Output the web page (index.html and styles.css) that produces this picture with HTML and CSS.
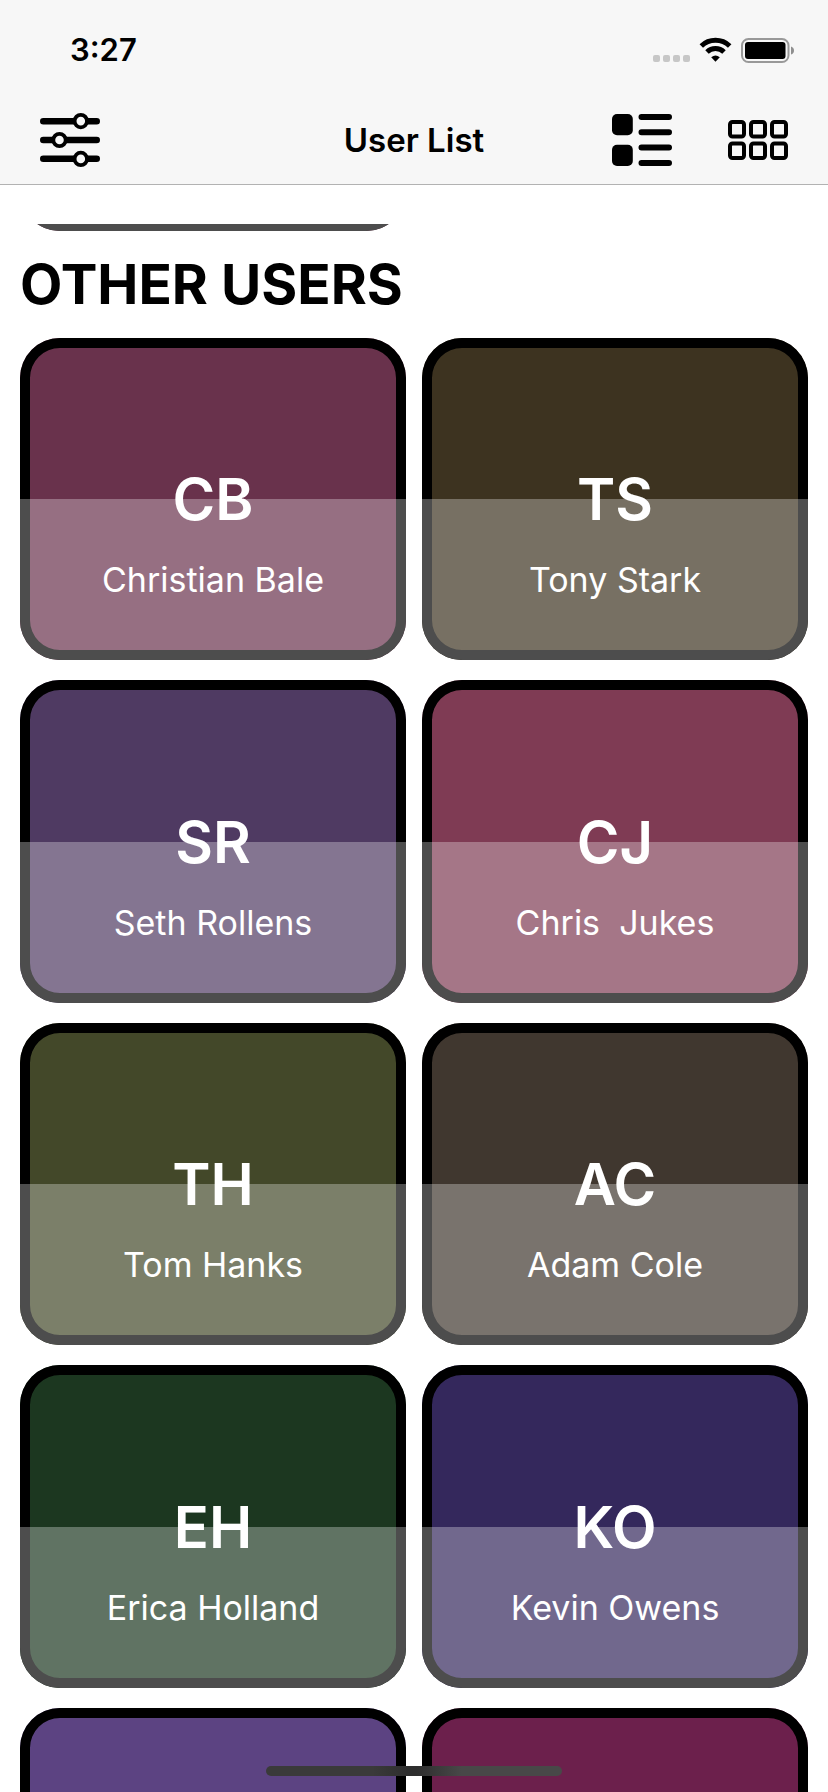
FILE: index.html
```html
<!DOCTYPE html>
<html lang="en">
<head>
<meta charset="utf-8">
<meta name="viewport" content="width=device-width, initial-scale=1">
<title>User List</title>
<link rel="stylesheet" href="styles.css">
</head>
<body>
<div class="app">
  <header class="header">
    <div class="status">
      <span class="status-time">3:27</span>
      <svg class="status-icons" width="142" height="26" viewBox="0 0 142 26" aria-hidden="true">
        <g fill="#c7c7c7">
          <rect x="0" y="18" width="7" height="7" rx="2"/>
          <rect x="10" y="18" width="7" height="7" rx="2"/>
          <rect x="20" y="18" width="7" height="7" rx="2"/>
          <rect x="30" y="18" width="7" height="7" rx="2"/>
        </g>
        <g fill="none" stroke="#000" stroke-width="5">
          <path d="M48.300 9A20.500 20.500 0 0 1 76.700 9"/>
          <path d="M54 15A12.200 12.200 0 0 1 71 15"/>
        </g>
        <path d="M58.200 20.200Q62.500 16.600 66.800 20.200L62.500 24.800Z"/>
        <rect x="89" y="2" width="46.500" height="23" rx="6.500" fill="none" stroke="#999" stroke-width="2"/>
        <rect x="92" y="5" width="40.500" height="17" rx="3"/>
        <path d="M138 9.500Q141 10.500 141 13.500T138 17.500Z" fill="#8f8f8f"/>
      </svg>
    </div>
    <nav class="navbar">
      <div class="nav-start">
        <button class="icon-button" type="button" aria-label="Filter">
          <svg width="60" height="54" viewBox="0 0 60 54">
            <g stroke="#000" stroke-width="6.600" stroke-linecap="round">
              <path d="M3.300 8.200H56.700M3.300 27H56.700M3.300 45.800H56.700"/>
            </g>
            <g fill="#f7f7f7" stroke="#000" stroke-width="3.800">
              <circle cx="40.800" cy="8.100" r="6.200"/>
              <circle cx="19.500" cy="27" r="6.200"/>
              <circle cx="40.800" cy="45.900" r="6.200"/>
            </g>
          </svg>
        </button>
      </div>
      <h1 class="title">User List</h1>
      <div class="nav-end">
        <button class="icon-button" type="button" aria-label="List view">
          <svg width="60" height="52" viewBox="0 0 60 52">
            <rect x="0" y="0" width="20.800" height="21.300" rx="5"/>
            <rect x="0" y="30.700" width="20.800" height="21.300" rx="5"/>
            <path d="M29.500 3H57M29.500 18.300H57M29.500 33.600H57M29.500 49H57" stroke="#000" stroke-width="6" stroke-linecap="round"/>
          </svg>
        </button>
        <button class="icon-button" type="button" aria-label="Grid view">
          <svg width="60" height="40" viewBox="0 0 60 40">
            <g fill="none" stroke="#000" stroke-width="4">
              <rect x="2" y="2" width="14" height="14.500" rx="2.500"/>
              <rect x="23" y="2" width="14" height="14.500" rx="2.500"/>
              <rect x="44" y="2" width="14" height="14.500" rx="2.500"/>
              <rect x="2" y="23.500" width="14" height="14.500" rx="2.500"/>
              <rect x="23" y="23.500" width="14" height="14.500" rx="2.500"/>
              <rect x="44" y="23.500" width="14" height="14.500" rx="2.500"/>
            </g>
          </svg>
        </button>
      </div>
    </nav>
  </header>

  <main class="content">
    <div class="grid previous">
      <div class="card plum"><div class="shade"></div></div>
    </div>
    <h2 class="section-title">OTHER USERS</h2>
    <ul class="grid">
      <li class="card plum"><div class="shade"></div><span class="initials">CB</span><span class="name">Christian Bale</span></li>
      <li class="card bronze"><div class="shade"></div><span class="initials">TS</span><span class="name">Tony Stark</span></li>
      <li class="card violet"><div class="shade"></div><span class="initials">SR</span><span class="name">Seth Rollens</span></li>
      <li class="card rose"><div class="shade"></div><span class="initials">CJ</span><span class="name">Chris  Jukes</span></li>
      <li class="card olive"><div class="shade"></div><span class="initials">TH</span><span class="name">Tom Hanks</span></li>
      <li class="card umber"><div class="shade"></div><span class="initials">AC</span><span class="name">Adam Cole</span></li>
      <li class="card forest"><div class="shade"></div><span class="initials">EH</span><span class="name">Erica Holland</span></li>
      <li class="card indigo"><div class="shade"></div><span class="initials">KO</span><span class="name">Kevin Owens</span></li>
      <li class="card purple"><div class="shade"></div></li>
      <li class="card berry"><div class="shade"></div></li>
    </ul>
  </main>
  <div class="home-indicator"></div>
</div>
</body>
</html>
```
FILE: styles.css
```css
* {
  box-sizing: border-box;
}

body {
  margin: 0;
  background: #fff;
  color: #000;
  font-family: Inter, "Liberation Sans", sans-serif;
}

.app {
  position: relative;
  display: flex;
  flex-direction: column;
  height: 100vh;
  overflow: hidden;
}

.header {
  flex: none;
  background: #f7f7f7;
  border-bottom: 1px solid #b2b2b2;
}

.status {
  display: flex;
  align-items: center;
  justify-content: space-between;
  height: 96px;
  padding: 4px 33px 0 70px;
}

.status-time {
  font-size: 31px;
  line-height: 40px;
  font-weight: 600;
}

.navbar {
  display: grid;
  grid-template-columns: 1fr auto 1fr;
  align-items: center;
  height: 88px;
  padding: 0 40px;
}

.nav-start,
.nav-end {
  display: flex;
  align-items: center;
}

.nav-end {
  justify-content: flex-end;
  gap: 56px;
}

.icon-button {
  display: flex;
  padding: 0;
  border: 0;
  background: none;
  color: inherit;
}

.title {
  margin: 0;
  font-size: 33px;
  line-height: 40px;
  font-weight: 600;
}

.content {
  flex: 1;
  min-height: 0;
  margin-top: 39px;
  overflow: hidden;
}

.grid {
  display: grid;
  grid-template-columns: 1fr 1fr;
  gap: 20px 16px;
  margin: 0;
  padding: 0 20px;
  list-style: none;
}

.previous {
  grid-template-rows: max-content;
  align-content: end;
  height: 7px;
  overflow: hidden;
}

.section-title {
  margin: 0;
  padding: 20px;
  font-size: 55px;
  line-height: 67px;
  font-weight: 700;
}

.card {
  position: relative;
  display: grid;
  grid-template-rows: 1fr 64px 1fr;
  justify-items: center;
  aspect-ratio: 1.197;
  border-radius: 40px;
  box-shadow: inset 0 0 0 10px #000;
  color: #fff;
  overflow: hidden;
}

.shade {
  position: absolute;
  inset: 50% 0 0;
  background: rgba(255, 255, 255, 0.3);
}

.initials {
  position: relative;
  grid-row: 2;
  font-size: 58px;
  line-height: 64px;
  font-weight: 600;
}

.name {
  position: relative;
  grid-row: 3;
  padding-top: 27px;
  font-size: 34px;
  line-height: 44px;
  white-space: pre;
}

.plum { background-color: #69324c; }
.bronze { background-color: #3d3320; }
.violet { background-color: #4f3a62; }
.rose { background-color: #7f3b54; }
.olive { background-color: #434829; }
.umber { background-color: #40372f; }
.forest { background-color: #1c3720; }
.indigo { background-color: #34285c; }
.purple { background-color: #5c4382; }
.berry { background-color: #6c204c; }

.home-indicator {
  position: absolute;
  bottom: 16px;
  left: 50%;
  width: 296px;
  height: 10px;
  margin-left: -148px;
  border-radius: 5px;
  background: linear-gradient(90deg, #3a3a3a 36%, #2e2e2e 48%, #2e2e2e 51%, #484848 66%);
}
```
